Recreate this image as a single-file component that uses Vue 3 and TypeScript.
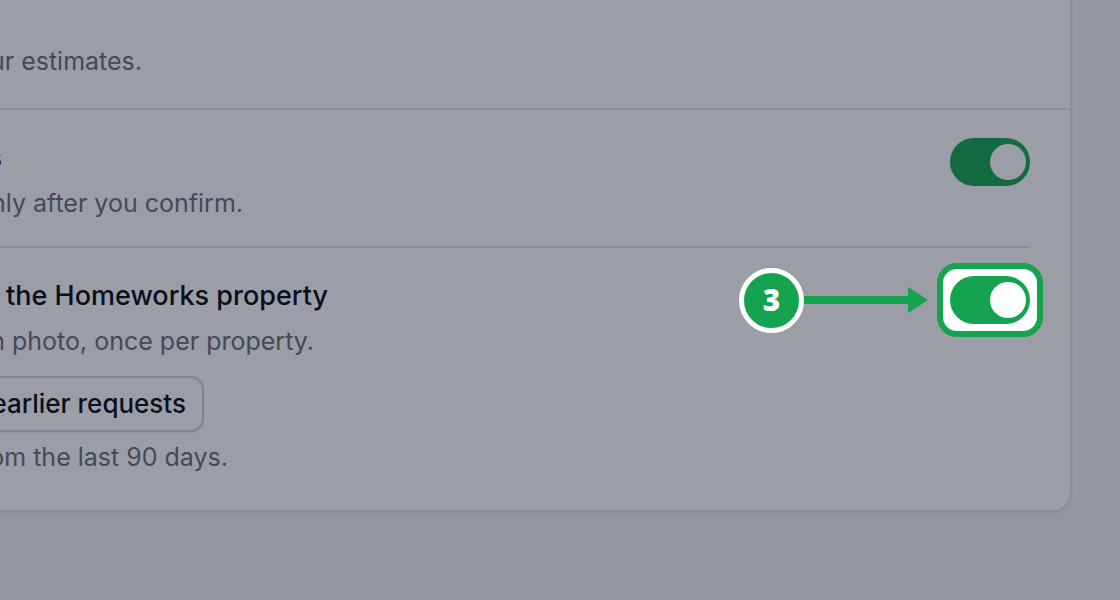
<script setup lang="ts">
import { ref } from 'vue'

const confirmFirst = ref(true)
const propertyPhoto = ref(true)
</script>

<template>
  <main class="page">
    <section class="card">
      <header class="intro">
        <p class="text w-intro">ur estimates.</p>
      </header>
      <div class="body">
        <div class="row first">
          <div class="copy">
            <h3 id="confirm-title" class="title w-cut">s</h3>
            <p class="text w-confirm">nly after you confirm.</p>
          </div>
          <input v-model="confirmFirst" class="switch dim" type="checkbox" role="switch" aria-labelledby="confirm-title" />
        </div>
        <div class="row second">
          <div class="copy">
            <h3 id="property-title" class="title w-title">the Homeworks property</h3>
            <p class="text w-photo">n photo, once per property.</p>
            <button type="button" class="btn">earlier requests</button>
            <p class="text w-days">om the last 90 days.</p>
          </div>
          <div class="callout">
            <span class="step">3</span>
            <svg class="arrow" width="124" height="26" viewBox="0 0 124 26" aria-hidden="true">
              <path d="M0 9H104V0L124 13L104 26V17H0Z" fill="#15a34f" />
            </svg>
            <span class="focus">
              <input v-model="propertyPhoto" class="switch" type="checkbox" role="switch" aria-labelledby="property-title" />
            </span>
          </div>
        </div>
      </div>
    </section>
  </main>
</template>

<style>
body {
  background: #9496a1;
}
</style>

<style scoped>
.page {
  min-height: 100vh;
  box-sizing: border-box;
  padding-right: 48px;
  overflow: hidden;
  background: #9496a1;
  font-family: Inter, "Liberation Sans", sans-serif;
}
.card {
  background: #9b9ea6;
  border: 2px solid #8b8e99;
  border-width: 0 2px 2px 0;
  border-bottom-right-radius: 20px;
  box-shadow: 0 2px 2px #8d909b;
}
.intro {
  padding: 41px 0 27px;
  border-bottom: 2px solid #8b8e99;
}
.body {
  padding-right: 40px;
}
.row {
  display: flex;
  justify-content: space-between;
  align-items: flex-start;
}
.first {
  padding: 28px 0 23px;
  border-bottom: 2px solid #8b8e99;
}
.second {
  padding: 28px 0 33px;
}
.copy {
  display: flex;
  flex-direction: column;
  align-items: flex-start;
}
.title,
.text {
  display: flex;
  justify-content: flex-end;
  margin: 0;
  overflow: hidden;
  white-space: nowrap;
  line-height: 40px;
}
.title {
  margin-bottom: 5px;
  font-size: 27px;
  font-weight: 500;
  color: #09101c;
}
.text {
  font-size: 25px;
  font-weight: 400;
  color: #434a58;
}
.w-intro { width: 142px; }
.w-cut { width: 2px; }
.w-confirm { width: 243px; }
.w-title { width: 328px; }
.w-photo { width: 314px; }
.w-days { width: 228px; }
.btn {
  display: flex;
  justify-content: flex-end;
  align-items: center;
  box-sizing: border-box;
  width: 204px;
  height: 56px;
  margin: 15px 0 5px;
  padding: 0 16px 2px 0;
  overflow: hidden;
  white-space: nowrap;
  border: 2px solid #82858f;
  border-left: 0;
  border-radius: 0 14px 14px 0;
  background: #9b9ea6;
  box-shadow: 0 1px 2px #8f929c;
  font-family: inherit;
  font-size: 26px;
  font-weight: 500;
  color: #09101c;
}
.switch {
  appearance: none;
  display: block;
  flex: none;
  box-sizing: border-box;
  width: 80px;
  height: 48px;
  margin: 0;
  padding: 6px 4px;
  border-radius: 24px;
  background: #9ca3af;
}
.switch:checked {
  background: #15a34f;
}
.switch::before {
  content: "";
  display: block;
  width: 36px;
  height: 36px;
  border-radius: 50%;
  background: #fff;
}
.switch:checked::before {
  margin-left: auto;
}
.dim:checked {
  background: #136a41;
}
.dim::before {
  background: #9b9ea6;
}
.callout {
  display: flex;
  align-items: center;
  margin: -13px -13px 0 0;
}
.step {
  display: flex;
  align-items: center;
  justify-content: center;
  box-sizing: border-box;
  width: 65px;
  height: 65px;
  border: 5px solid #fff;
  border-radius: 50%;
  background: #15a34f;
  color: #fff;
  font-family: "Open Sans", "Noto Sans", sans-serif;
  font-size: 30px;
  font-weight: 800;
  line-height: 1;
}
.arrow {
  display: block;
  margin-right: 9px;
}
.focus {
  padding: 7px;
  border: 6px solid #15a34f;
  border-radius: 20px;
  background: #fff;
}
</style>
